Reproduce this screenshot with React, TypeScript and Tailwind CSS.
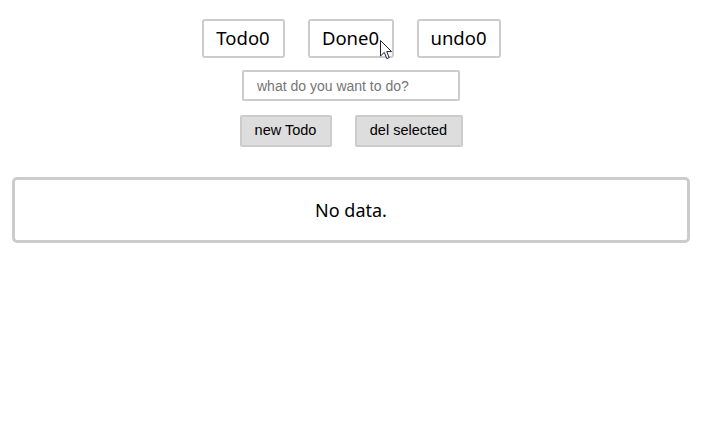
import React from 'react';

const tabs = [
  { label: 'Todo0', w: 'w-[83px]' },
  { label: 'Done0', w: 'w-[86px]' },
  { label: 'undo0', w: 'w-[84px]' },
];

export default function App() {
  return (
    <div className="relative w-[702px] bg-white min-h-[443px]" style={{ fontFamily: '"Noto Sans", "Open Sans", sans-serif' }}>
      <div className="flex flex-col items-center px-3 pt-[19px]">
        {/* Filter tabs */}
        <div className="flex gap-[23px]">
          {tabs.map((t) => (
            <button
              key={t.label}
              className={`${t.w} h-[39px] border-2 border-[#cccccc] rounded-[3px] bg-white text-[18.5px] text-black leading-none flex items-center justify-center`}
            >
              {t.label}
            </button>
          ))}
        </div>

        <input
          className="mt-3 w-[218px] h-[31px] border-2 border-[#cccccc] rounded-[2px] px-[13px] text-[14px] outline-none placeholder:text-[#757575]"
          style={{ fontFamily: '"Liberation Sans", Arial, sans-serif' }}
          placeholder="what do you want to do?"
        />

        <div className="mt-[14px] flex gap-[23px]" style={{ fontFamily: '"Liberation Sans", Arial, sans-serif' }}>
          <button className="h-[32px] w-[92px] border-2 border-[#cccccc] rounded-[2px] bg-[#dddddd] text-[14.5px] text-black">
            new Todo
          </button>
          <button className="h-[32px] w-[108px] border-2 border-[#cccccc] rounded-[2px] bg-[#dddddd] text-[14.5px] text-black">
            del selected
          </button>
        </div>

        {/* List */}
        <div className="mt-[30px] w-full h-[66px] border-[3px] border-[#cccccc] rounded-[5px] flex items-center justify-center text-[18px] text-black">
          No data.
        </div>
      </div>

      {/* mouse cursor */}
      <svg className="absolute left-[380px] top-[40px]" width="13" height="20" viewBox="0 0 13 20">
        <path d="M0.5 0.5 L0.5 16 L4.3 12.4 L6.8 18.6 L9.2 17.6 L6.7 11.6 L11.6 11.6 Z" fill="white" stroke="#2a1f3d" strokeWidth="1" strokeLinejoin="round" />
      </svg>
    </div>
  );
}
